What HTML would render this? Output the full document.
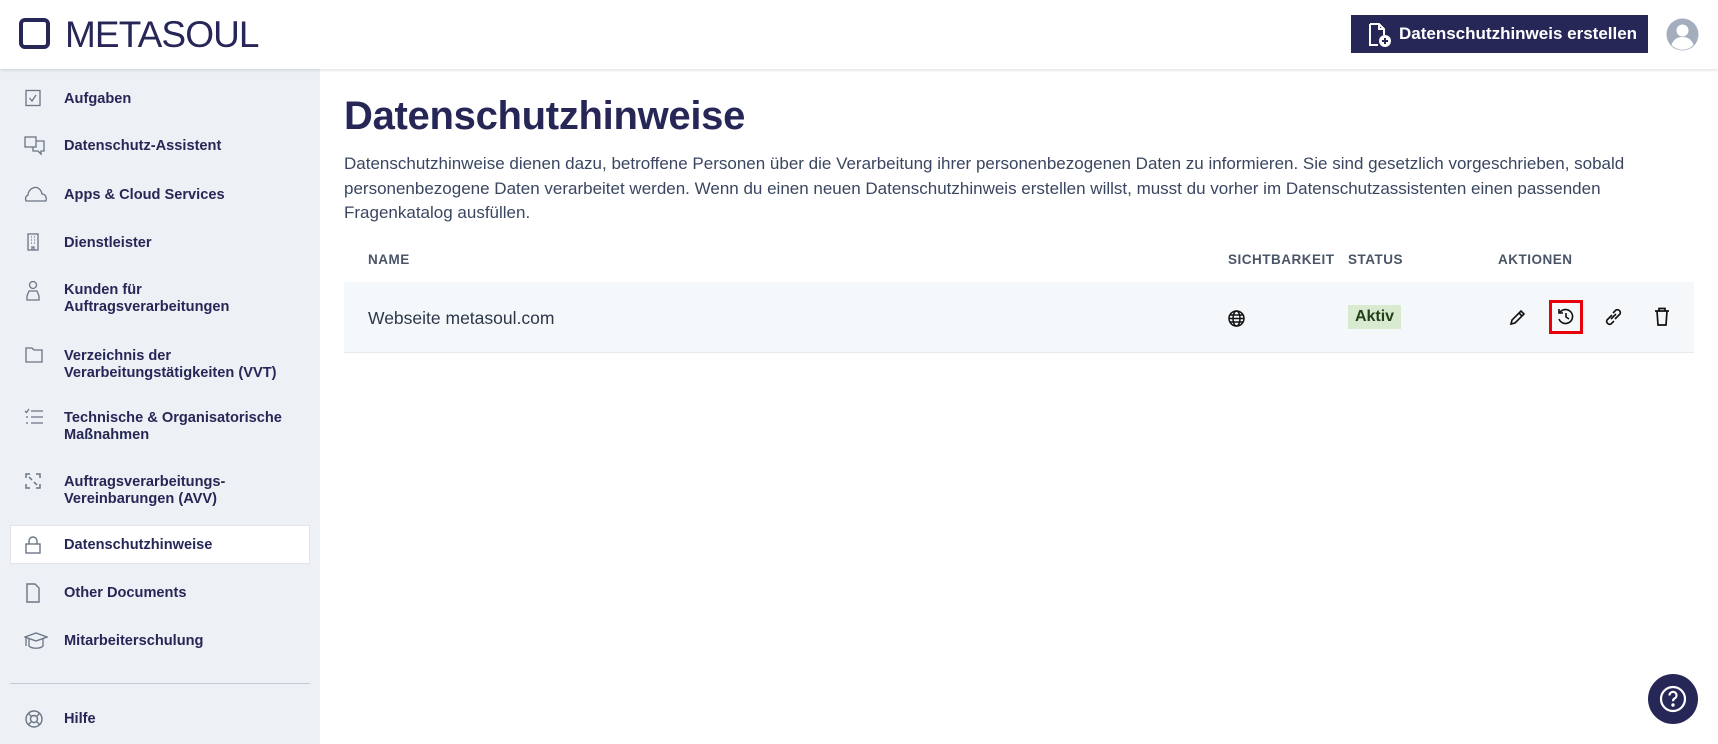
<!DOCTYPE html>
<html><head><meta charset="utf-8"><style>
*{box-sizing:border-box;margin:0;padding:0}
body{width:1718px;height:744px;overflow:hidden;background:#fff;font-family:"Liberation Sans",sans-serif;color:#272757;position:relative}
.hdr{position:absolute;left:0;top:0;width:1718px;height:69px;background:#fff;box-shadow:0 1px 3px rgba(0,0,0,.15);z-index:2}
.logo{position:absolute;left:19px;top:18px;width:31px;height:31px;border:4px solid #272757;border-radius:6px}
.logot{position:absolute;left:65px;top:14px;font-size:37px;letter-spacing:-0.9px;color:#272757}
.btn{position:absolute;left:1351px;top:15px;width:297px;height:38px;background:#272757;color:#fff;font-weight:bold;font-size:17px;line-height:38px;padding-left:48px}
.btn svg{position:absolute;left:16px;top:7px}
.av{position:absolute;left:1666px;top:18px}
.side{position:absolute;left:0;top:69px;width:320px;height:675px;background:#edf1f5}
.it{position:absolute;left:0;width:320px;font-size:14.6px;font-weight:bold;line-height:17px;color:#272757}
.it .t{position:absolute;left:64px;top:1px}
.it svg{position:absolute;left:24px;top:-1px}
.act{position:absolute;left:10px;top:525px;width:300px;height:39px;background:#fff;border:1px solid #e2e6ea}
.div{position:absolute;left:10px;top:683px;width:300px;height:1px;background:#c8ccd2}
h1{position:absolute;left:344px;top:94px;font-size:40px;font-weight:bold;color:#272757;letter-spacing:-0.3px}
p{position:absolute;left:344px;top:152px;width:1340px;font-size:17px;line-height:24.6px;color:#3a4660}
.th{position:absolute;top:252px;font-size:13.5px;font-weight:bold;color:#4a5568;letter-spacing:.5px}
.row{position:absolute;left:344px;top:282px;width:1350px;height:71px;background:#f5f8fb;border-bottom:1px solid #e6eaee}
.badge{position:absolute;left:1348px;top:305px;width:53px;height:24px;background:#d8ebd0;color:#234017;font-weight:bold;font-size:16px;text-align:center;line-height:24px}
.help{position:absolute;left:1648px;top:674px;width:50px;height:50px;border-radius:50%;background:#272757}
</style></head><body>
<div class="hdr">
<div class="logo"></div><div class="logot">METASOUL</div>
<div class="btn"><svg width="26" height="26" viewBox="0 0 26 26" fill="none" stroke="#fff" stroke-width="2"><path d="M3 2h9l5 5v6M3 2v21h8"/><path d="M12 2v5h5"/><circle cx="18" cy="19" r="6" fill="#fff" stroke="none"/><path d="M18 16v6M15 19h6" stroke="#272757"/></svg>Datenschutzhinweis erstellen</div>
<svg class="av" width="33" height="33" viewBox="0 0 33 33"><circle cx="16.5" cy="16.5" r="16" fill="#a3adbd"/><circle cx="16.5" cy="12.5" r="6" fill="#fff"/><path d="M5.5 27c2-6 6-8 11-8s9 2 11 8a15 15 0 0 1-22 0z" fill="#fff"/></svg>
</div>
<div class="side"></div>
<div class="act"></div>
<div class="div"></div>
<div class="it" style="top:90px"><svg width="18" height="18" viewBox="0 0 18 18" fill="none" stroke="#6b7585" stroke-width="1.3"><rect x="2" y="1.5" width="14" height="15"/><path d="M5.5 9l2.5 3 4-6"/></svg><span class="t">Aufgaben</span></div>
<div class="it" style="top:137px"><svg width="22" height="20" viewBox="0 0 22 20" fill="none" stroke="#6b7585" stroke-width="1.3"><rect x="1" y="1" width="11" height="10"/><path d="M12 5h8v10h-3v3l-3-3h-5v-4"/></svg><span class="t">Datenschutz-Assistent</span></div>
<div class="it" style="top:186px"><svg width="24" height="18" viewBox="0 0 24 18" fill="none" stroke="#6b7585" stroke-width="1.3"><path d="M2 16h20c1-4-1-7-4-7-1-5-5-8-9-6-3 1-5 4-5 7-2 1-3 3-2 6z"/></svg><span class="t">Apps &amp; Cloud Services</span></div>
<div class="it" style="top:234px"><svg width="18" height="18" viewBox="0 0 18 18" fill="none" stroke="#6b7585" stroke-width="1.3"><rect x="4" y="1" width="10" height="16"/><path d="M7 4h1M10 4h1M7 7h1M10 7h1M7 10h1M10 10h1M8 17v-3h2v3"/></svg><span class="t">Dienstleister</span></div>
<div class="it" style="top:281px"><svg width="18" height="22" viewBox="0 0 18 22" fill="none" stroke="#6b7585" stroke-width="1.3"><circle cx="9" cy="5" r="3.5"/><path d="M3 20v-4l2-5h8l2 5v4z"/></svg><span class="t">Kunden für<br>Auftragsverarbeitungen</span></div>
<div class="it" style="top:347px"><svg width="20" height="18" viewBox="0 0 20 18" fill="none" stroke="#6b7585" stroke-width="1.3"><path d="M2 2h6l2 2h8v12H2z"/></svg><span class="t">Verzeichnis der<br>Verarbeitungstätigkeiten (VVT)</span></div>
<div class="it" style="top:409px"><svg width="20" height="18" viewBox="0 0 20 18" fill="none" stroke="#6b7585" stroke-width="1.3"><path d="M7 3h12M7 9h12M7 15h12M1 3l1.5 1.5L5 1M2 9h2M2 15h2"/></svg><span class="t">Technische &amp; Organisatorische<br>Maßnahmen</span></div>
<div class="it" style="top:473px"><svg width="18" height="18" viewBox="0 0 18 18" fill="none" stroke="#6b7585" stroke-width="1.5"><path d="M2 6V2h4M12 2h4v4M16 12v4h-4M6 16H2v-4M5 5l3 3M13 13l-3-3"/></svg><span class="t">Auftragsverarbeitungs-<br>Vereinbarungen (AVV)</span></div>
<div class="it" style="top:536px"><svg width="18" height="20" viewBox="0 0 18 20" fill="none" stroke="#6b7585" stroke-width="1.4"><rect x="2" y="9" width="14" height="9"/><path d="M5 9V6a4 4 0 0 1 8 0v3"/></svg><span class="t">Datenschutzhinweise</span></div>
<div class="it" style="top:584px"><svg width="18" height="20" viewBox="0 0 18 20" fill="none" stroke="#6b7585" stroke-width="1.4"><path d="M3 1h8l4 4v14H3z"/></svg><span class="t">Other Documents</span></div>
<div class="it" style="top:632px"><svg width="24" height="20" viewBox="0 0 24 20" fill="none" stroke="#6b7585" stroke-width="1.3"><path d="M1 6l11-4 11 4-11 4z"/><path d="M5 8v7c3 3 11 3 14 0V8M2 7v8"/></svg><span class="t">Mitarbeiterschulung</span></div>
<div class="it" style="top:710px"><svg width="20" height="20" viewBox="0 0 20 20" fill="none" stroke="#6b7585" stroke-width="1.4"><circle cx="10" cy="10" r="8"/><circle cx="10" cy="10" r="3.5"/><path d="M4.5 4.5l3 3M15.5 4.5l-3 3M4.5 15.5l3-3M15.5 15.5l-3-3"/></svg><span class="t">Hilfe</span></div>

<h1>Datenschutzhinweise</h1>
<p>Datenschutzhinweise dienen dazu, betroffene Personen über die Verarbeitung ihrer personenbezogenen Daten zu informieren. Sie sind gesetzlich vorgeschrieben, sobald personenbezogene Daten verarbeitet werden. Wenn du einen neuen Datenschutzhinweis erstellen willst, musst du vorher im Datenschutzassistenten einen passenden Fragenkatalog ausfüllen.</p>
<div class="th" style="left:368px">NAME</div>
<div class="th" style="left:1228px">SICHTBARKEIT</div>
<div class="th" style="left:1348px">STATUS</div>
<div class="th" style="left:1498px">AKTIONEN</div>
<div class="row"></div>
<div style="position:absolute;left:368px;top:308px;font-size:17.5px;color:#2d3748">Webseite metasoul.com</div>
<svg style="position:absolute;left:1228px;top:310px" width="17" height="17" viewBox="0 0 17 17" fill="none" stroke="#111" stroke-width="1.5"><circle cx="8.5" cy="8.5" r="7.5"/><ellipse cx="8.5" cy="8.5" rx="3.5" ry="7.5"/><path d="M1 8.5h15M2 5h13M2 12h13"/></svg>
<div class="badge">Aktiv</div>
<svg style="position:absolute;left:1509px;top:309px" width="17" height="17" viewBox="0 0 17 17" fill="none" stroke="#111" stroke-width="1.6"><path d="M2 15l1-4 9-9 3 3-9 9z M10 4l3 3"/></svg>
<div style="position:absolute;left:1549px;top:300px;width:34px;height:34px;border:3px solid #e8000b"></div>
<svg style="position:absolute;left:1556px;top:307px" width="20" height="20" viewBox="0 0 20 20" fill="none" stroke="#111" stroke-width="1.6"><path d="M3.5 6A7 7 0 1 1 3 12"/><path d="M3 2v4h4"/><path d="M10 6v4l3 2"/></svg>
<svg style="position:absolute;left:1603px;top:307px" width="21" height="20" viewBox="0 0 21 20" fill="none" stroke="#111" stroke-width="1.6"><path d="M9 8l-5 5a3 3 0 0 0 4 4l3-3M12 12l5-5a3 3 0 0 0-4-4l-3 3"/><path d="M8 12l5-5"/></svg>
<svg style="position:absolute;left:1653px;top:307px" width="18" height="20" viewBox="0 0 18 20" fill="none" stroke="#111" stroke-width="1.7"><path d="M2 4h14M6 4V1.5h6V4M4 4l1 14h8l1-14"/></svg>
<div class="help"><svg width="50" height="50" viewBox="0 0 50 50" fill="none" stroke="#fff" stroke-width="2.2"><circle cx="25" cy="25" r="12"/><path d="M21.5 21.5a3.5 3.5 0 1 1 5 3c-1.3.7-1.5 1.5-1.5 2.8"/><circle cx="25" cy="31" r=".6" fill="#fff"/></svg></div>
</body></html>
